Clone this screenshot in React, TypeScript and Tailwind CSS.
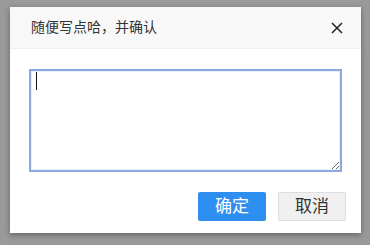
const FONT = { fontFamily: '"Liberation Sans", "Noto Sans CJK SC", sans-serif' };

export default function App() {
  return (
    <div className="w-[370px] h-[245px] bg-[#9a9a9a] pt-[7px] pl-[10px]" style={FONT}>
      <div className="w-[351px] h-[226px] bg-white shadow-[0_2px_6px_rgba(0,0,0,0.35)] flex flex-col">
        <div className="h-[42px] bg-[#f8f8f8] border-b border-[#f0f0f0] flex items-center justify-between pl-[21px] pr-[18px]">
          <span className="text-[14px] text-[#333]">随便写点哈，并确认</span>
          <svg width="12" height="12" viewBox="0 0 12 12" className="text-[#222]">
            <path d="M1 1L11 11M11 1L1 11" stroke="currentColor" strokeWidth="1.5" />
          </svg>
        </div>
        <div className="pt-[20px] px-[19px]">
          <div className="relative w-[313px] h-[103px]">
            <textarea
              className="block w-[313px] h-[103px] border-2 border-[#8fa9e0] outline-none px-[6px] py-[2px] text-[14px] text-[#333] shadow-[inset_0_0_0_1px_#e8eefa]"
            />
            <div className="absolute left-[7px] top-[3px] w-[1px] h-[18px] bg-[#111]" />
          </div>
        </div>
        <div className="flex justify-end gap-[12px] pt-[20px] pr-[15px]">
          <button className="w-[68px] h-[29px] bg-[#2f8ff0] text-white text-[17px] rounded-[2px]">确定</button>
          <button className="w-[68px] h-[29px] bg-[#f0f0f0] border border-[#ddd] text-[#333] text-[17px] rounded-[2px]">取消</button>
        </div>
      </div>
    </div>
  );
}
